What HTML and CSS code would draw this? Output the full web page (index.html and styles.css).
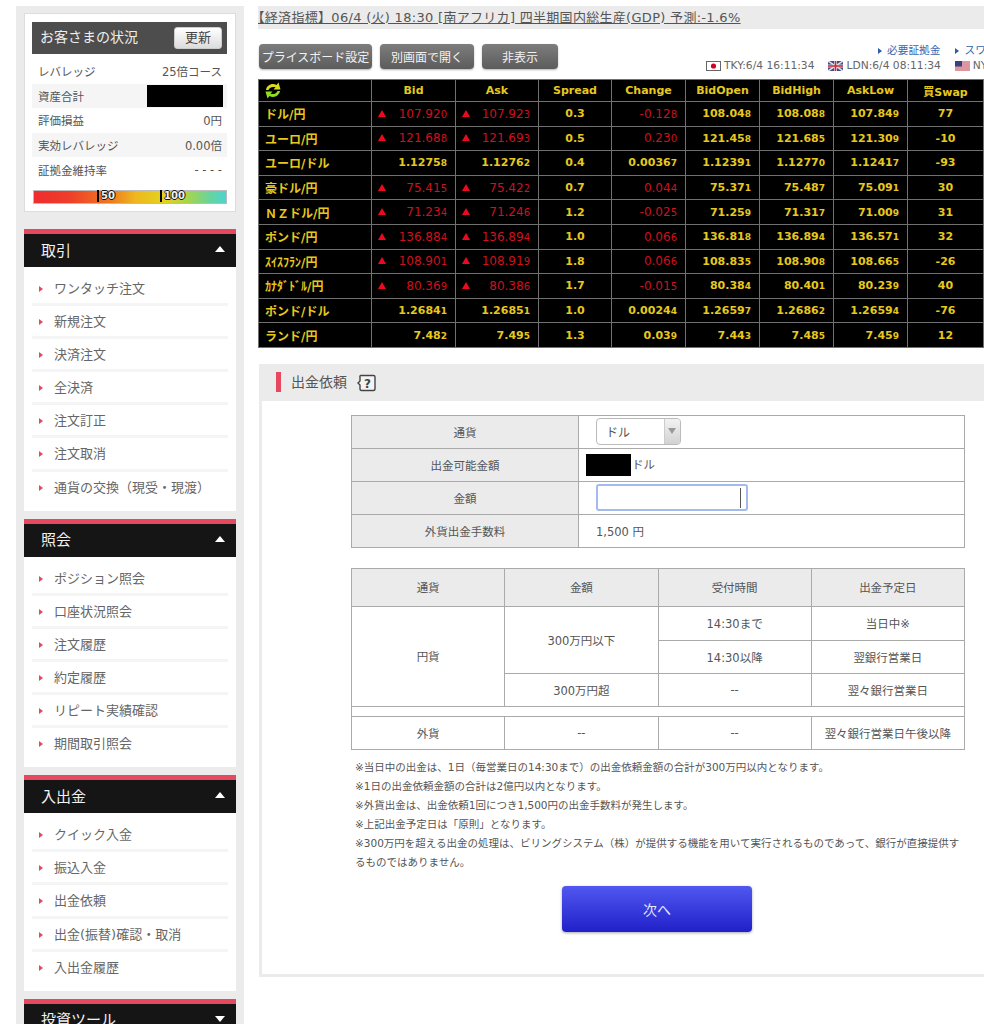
FILE: index.html
```html
<!DOCTYPE html>
<html lang="ja">
<head>
<meta charset="utf-8">
<title>出金依頼</title>
<link rel="stylesheet" href="styles.css">
</head>
<body>
<div class="page">
  <aside class="sidebar">
    <section class="status">
      <div class="status-head"><span class="status-title">お客さまの状況</span><button class="refresh">更新</button></div>
      <dl class="status-rows">
        <div class="status-row"><dt>レバレッジ</dt><dd>25倍コース</dd></div>
        <div class="status-row alt"><dt>資産合計</dt><dd><span class="redact-side"></span></dd></div>
        <div class="status-row"><dt>評価損益</dt><dd>0円</dd></div>
        <div class="status-row alt"><dt>実効レバレッジ</dt><dd>0.00倍</dd></div>
        <div class="status-row"><dt>証拠金維持率</dt><dd>- - - -</dd></div>
      </dl>
      <div class="gauge"><span class="mark m50">50</span><span class="mark m100">100</span></div>
    </section>

    <section class="nav first">
      <h2 class="nav-head">取引<i class="tri up"></i></h2>
      <ul class="nav-list">
        <li>ワンタッチ注文</li><li>新規注文</li><li>決済注文</li><li>全決済</li><li>注文訂正</li><li>注文取消</li><li>通貨の交換（現受・現渡）</li>
      </ul>
    </section>
    <section class="nav">
      <h2 class="nav-head">照会<i class="tri up"></i></h2>
      <ul class="nav-list">
        <li>ポジション照会</li><li>口座状況照会</li><li>注文履歴</li><li>約定履歴</li><li>リピート実績確認</li><li>期間取引照会</li>
      </ul>
    </section>
    <section class="nav">
      <h2 class="nav-head">入出金<i class="tri up"></i></h2>
      <ul class="nav-list">
        <li>クイック入金</li><li>振込入金</li><li>出金依頼</li><li>出金(振替)確認・取消</li><li>入出金履歴</li>
      </ul>
    </section>
    <section class="nav">
      <h2 class="nav-head">投資ツール<i class="tri down"></i></h2>
    </section>
  </aside>

  <main class="main">
    <div class="ticker"><a><span class="tight">【</span>経済指標】06/4 (火) 18:30 [南アフリカ] 四半期国内総生産(GDP) 予測:-1.6%</a></div>

    <div class="toolbar">
      <div class="tool-buttons">
        <button class="tool w1">プライスボード設定</button>
        <button class="tool w2">別画面で開く</button>
        <button class="tool w3">非表示</button>
      </div>
      <div class="tool-info">
        <div class="links"><a class="lnk">必要証拠金</a><a class="lnk">スワップ</a></div>
        <div class="clocks">
          <span class="clock"><svg class="flag" viewBox="0 0 15 10"><rect x=".5" y=".5" width="14" height="9" fill="#fff" stroke="#666"/><circle cx="7.5" cy="5" r="2.6" fill="#d3002a"/></svg>TKY:6/4 16:11:34</span>
          <span class="clock"><svg class="flag" viewBox="0 0 15 10"><rect width="15" height="10" fill="#3c4a8c"/><path d="M0 0L15 10M15 0L0 10" stroke="#ddd" stroke-width="1.6"/><path d="M7.5 0V10M0 5H15" stroke="#ddd" stroke-width="3"/><path d="M7.5 0V10M0 5H15" stroke="#c8283c" stroke-width="1.6"/></svg>LDN:6/4 08:11:34</span>
          <span class="clock"><svg class="flag" viewBox="0 0 15 10"><rect width="15" height="10" fill="#f3f3f3"/><path d="M0 1H15M0 3H15M0 5H15M0 7H15M0 9H15" stroke="#c8384a" stroke-width="1"/><rect width="7" height="5.5" fill="#39427f"/></svg>NY:6/4 03:11:34</span>
        </div>
      </div>
    </div>

    <table class="board">
      <colgroup><col class="c0"><col class="c1"><col class="c2"><col class="c3"><col class="c4"><col class="c5"><col class="c6"><col class="c7"><col class="c8"><col class="c9"></colgroup>
      <thead>
        <tr>
          <th class="icon-cell"><svg class="reload" viewBox="0 0 16 17"><path d="M1 8C1.500 3.500 7 0.500 11.500 3L13.500 0.500L15.500 7.500L8.500 7.500L10.500 5.300C7.500 4.300 4.500 5.300 3.500 8Z" fill="#d8dc1e"/><path d="M15 9C14.500 13.500 9 16.500 4.500 14L2.500 16.500L0.500 9.500L7.500 9.500L5.500 11.700C8.500 12.700 11.500 11.700 12.500 9Z" fill="#8ee01e"/></svg></th>
          <th>Bid</th><th>Ask</th><th>Spread</th><th>Change</th><th>BidOpen</th><th>BidHigh</th><th>AskLow</th><th>買Swap</th><th></th>
        </tr>
      </thead>
      <tbody>
        <tr><th>ドル/円</th><td class="up">107.92<small>0</small></td><td class="up">107.92<small>3</small></td><td class="ctr">0.3</td><td class="neg">-0.12<small>8</small></td><td>108.04<small>8</small></td><td>108.08<small>8</small></td><td>107.84<small>9</small></td><td class="ctr">77</td><td></td></tr>
        <tr><th>ユーロ/円</th><td class="up">121.68<small>8</small></td><td class="up">121.69<small>3</small></td><td class="ctr">0.5</td><td class="neg">0.23<small>0</small></td><td>121.45<small>8</small></td><td>121.68<small>5</small></td><td>121.30<small>9</small></td><td class="ctr">-10</td><td></td></tr>
        <tr><th>ユーロ/ドル</th><td>1.1275<small>8</small></td><td>1.1276<small>2</small></td><td class="ctr">0.4</td><td>0.0036<small>7</small></td><td>1.1239<small>1</small></td><td>1.1277<small>0</small></td><td>1.1241<small>7</small></td><td class="ctr">-93</td><td></td></tr>
        <tr><th>豪ドル/円</th><td class="up">75.41<small>5</small></td><td class="up">75.42<small>2</small></td><td class="ctr">0.7</td><td class="neg">0.04<small>4</small></td><td>75.37<small>1</small></td><td>75.48<small>7</small></td><td>75.09<small>1</small></td><td class="ctr">30</td><td></td></tr>
        <tr><th>ＮＺドル/円</th><td class="up">71.23<small>4</small></td><td class="up">71.24<small>6</small></td><td class="ctr">1.2</td><td class="neg">-0.02<small>5</small></td><td>71.25<small>9</small></td><td>71.31<small>7</small></td><td>71.00<small>9</small></td><td class="ctr">31</td><td></td></tr>
        <tr><th>ポンド/円</th><td class="up">136.88<small>4</small></td><td class="up">136.89<small>4</small></td><td class="ctr">1.0</td><td class="neg">0.06<small>6</small></td><td>136.81<small>8</small></td><td>136.89<small>4</small></td><td>136.57<small>1</small></td><td class="ctr">32</td><td></td></tr>
        <tr><th>ｽｲｽﾌﾗﾝ/円</th><td class="up">108.90<small>1</small></td><td class="up">108.91<small>9</small></td><td class="ctr">1.8</td><td class="neg">0.06<small>6</small></td><td>108.83<small>5</small></td><td>108.90<small>8</small></td><td>108.66<small>5</small></td><td class="ctr">-26</td><td></td></tr>
        <tr><th>ｶﾅﾀﾞﾄﾞﾙ/円</th><td class="up">80.36<small>9</small></td><td class="up">80.38<small>6</small></td><td class="ctr">1.7</td><td class="neg">-0.01<small>5</small></td><td>80.38<small>4</small></td><td>80.40<small>1</small></td><td>80.23<small>9</small></td><td class="ctr">40</td><td></td></tr>
        <tr><th>ポンド/ドル</th><td>1.2684<small>1</small></td><td>1.2685<small>1</small></td><td class="ctr">1.0</td><td>0.0024<small>4</small></td><td>1.2659<small>7</small></td><td>1.2686<small>2</small></td><td>1.2659<small>4</small></td><td class="ctr">-76</td><td></td></tr>
        <tr><th>ランド/円</th><td>7.48<small>2</small></td><td>7.49<small>5</small></td><td class="ctr">1.3</td><td>0.03<small>9</small></td><td>7.44<small>3</small></td><td>7.48<small>5</small></td><td>7.45<small>9</small></td><td class="ctr">12</td><td></td></tr>
      </tbody>
    </table>

    <section class="panel">
      <header class="panel-head">
        <h1>出金依頼</h1>
        <svg class="help" viewBox="0 0 19 18"><path d="M4 1.500H16.500A1.500 1.500 0 0 1 18 3V15A1.500 1.500 0 0 1 16.500 16.500H4.500A1.500 1.500 0 0 1 3 15V11L1 9L3 7V3A1 1 0 0 1 4 1.500Z" fill="#f4f4f4" stroke="#444" stroke-width="1.400"/><text x="10.500" y="13.500" class="help-q">?</text></svg>
      </header>
      <div class="panel-body">
        <table class="form-table">
          <tr><th>通貨</th><td><div class="select"><span>ドル</span><i class="select-btn"></i></div></td></tr>
          <tr><th>出金可能金額</th><td class="avail"><span class="redact-form"></span><span>ドル</span></td></tr>
          <tr><th>金額</th><td><div class="input"><i class="caret"></i></div></td></tr>
          <tr><th>外貨出金手数料</th><td class="fee">1,500 円</td></tr>
        </table>

        <table class="info-table">
          <thead><tr><th>通貨</th><th>金額</th><th>受付時間</th><th>出金予定日</th></tr></thead>
          <tbody>
            <tr class="r1"><td rowspan="3">円貨</td><td rowspan="2">300万円以下</td><td>14:30まで</td><td>当日中※</td></tr>
            <tr class="r2"><td>14:30以降</td><td>翌銀行営業日</td></tr>
            <tr class="r2"><td>300万円超</td><td>--</td><td>翌々銀行営業日</td></tr>
            <tr class="spacer"><td colspan="4"></td></tr>
            <tr class="r2"><td>外貨</td><td>--</td><td>--</td><td>翌々銀行営業日午後以降</td></tr>
          </tbody>
        </table>

        <ul class="notes">
          <li>※当日中の出金は、1日（毎営業日の14:30まで）の出金依頼金額の合計が300万円以内となります。</li>
          <li>※1日の出金依頼金額の合計は2億円以内となります。</li>
          <li>※外貨出金は、出金依頼1回につき1,500円の出金手数料が発生します。</li>
          <li>※上記出金予定日は「原則」となります。</li>
          <li>※300万円を超える出金の処理は、ビリングシステム（株）が提供する機能を用いて実行されるものであって、銀行が直接提供するものではありません。</li>
        </ul>

        <div class="next-wrap"><button class="next">次へ</button></div>
      </div>
    </section>
  </main>
</div>
</body>
</html>
```

FILE: styles.css
```css
* { box-sizing: border-box; }
html, body { margin: 0; padding: 0; height: 1024px; overflow: hidden; background: #fff; }
body { font-family: "DejaVu Sans", "Noto Sans CJK JP", sans-serif; color: #555; font-size: 12px; }
h1, h2, ul, dl, dd { margin: 0; padding: 0; }
ul { list-style: none; }
button { font-family: inherit; cursor: pointer; }

.page { display: flex; width: 984px; height: 1024px; overflow: hidden; }

/* Sidebar */
.sidebar { flex: 0 0 228px; margin: 6px 0 0 16px; padding: 7px 8px 0; background: #ebebeb; }
.status { height: 199px; background: #fff; border: 1px solid #ddd; padding: 8px 8px 0 7px; }
.status-head { display: flex; align-items: center; justify-content: space-between; height: 32px; padding: 0 5px 0 8px; background: #4d4d4d; color: #eee; font-size: 14px; }
.status-title { padding-bottom: 4px; }
.refresh { width: 48px; height: 22px; padding: 0; border: 1px solid #ccc; border-radius: 3px; background: linear-gradient(#fff, #dcdcdc); color: #444; font-size: 13px; line-height: 20px; }
.status-rows { margin-top: 5px; }
.status-row { display: flex; align-items: center; justify-content: space-between; height: 24.6px; padding: 0 5px 0 6px; font-size: 11.5px; }
.status-row.alt { background: #f5f5f5; }
.status-row dt { color: #555; }
.status-row dd { color: #555; }
.redact-side { display: block; width: 76px; height: 22px; margin-right: -1px; background: #000; }
.gauge { position: relative; height: 14px; margin: 8px 0 0 1px; border: 1px solid #bbb; background: linear-gradient(90deg, #ee2d30 0%, #ee3d2a 18%, #ee7a20 40%, #eeb81e 53%, #e2d41e 68%, #a8d44c 80%, #66d4a0 92%, #4cd4d0 100%); }
.mark { position: absolute; top: -1px; height: 12px; padding-left: 2px; border-left: 2px solid #000; font-size: 10px; font-weight: bold; line-height: 12px; color: #f2f2f2; text-shadow: 1px 0 0 #111, -1px 0 0 #111, 0 1px 0 #111, 0 -1px 0 #111; }
.m50 { left: 63px; }
.m100 { left: 126px; }

.nav { margin-top: 8px; background: #fff; }
.nav.first { margin-top: 17px; }
.nav-head { display: flex; align-items: center; justify-content: space-between; height: 38px; padding: 0 11px 3px 17px; border-top: 5px solid #e6495f; background: #151515; color: #f2f2f2; font-size: 15px; font-weight: normal; }
.tri { width: 0; height: 0; border-left: 5.500px solid transparent; border-right: 5.500px solid transparent; }
.tri.up { border-bottom: 6px solid #fff; }
.tri.down { border-top: 6px solid #fff; }
.nav-list { padding: 6px 8px; }
.nav-list li { position: relative; height: 33.1px; padding-left: 22px; border-bottom: 3px solid #f5f5f5; color: #666; font-size: 13px; line-height: 32px; white-space: nowrap; }
.nav-list li:last-child { border-bottom: 0; }
.nav-list li::before { content: ""; position: absolute; left: 7px; top: 13px; border-left: 4px solid #e6495f; border-top: 3px solid transparent; border-bottom: 3px solid transparent; }

/* Main */
.main { flex: 0 0 725px; margin-left: 15px; margin-top: 6px; min-width: 0; }
.ticker { height: 23px; margin-left: -1px; width: 727px; background: #ebebeb; font-size: 13px; line-height: 23px; color: #555; white-space: nowrap; letter-spacing: .3px; }
.ticker a { text-decoration: underline; }
.tight { font-feature-settings: "halt"; }

.toolbar { display: flex; justify-content: space-between; height: 50px; padding-top: 15px; }
.tool-buttons { display: flex; gap: 8px; }
.tool { height: 25px; padding: 0; border: 0; border-radius: 4px; background: linear-gradient(#7d7d7d, #5c5c5c); color: #f2f2f2; font-size: 12px; box-shadow: 0 1px 2px rgba(0,0,0,.3); white-space: nowrap; }
.w1 { width: 113px; }
.w2 { width: 94px; }
.w3 { width: 76px; }
.tool-info { display: flex; flex-direction: column; width: 278px; flex: none; overflow: hidden; font-size: 10.7px; }
.links { display: flex; gap: 15px; padding-left: 172px; height: 15px; line-height: 14px; white-space: nowrap; }
.lnk { position: relative; padding-left: 9px; color: #3566ad; }
.lnk::before { content: ""; position: absolute; left: 0; top: 4px; border-left: 4px solid #2b5da8; border-top: 3px solid transparent; border-bottom: 3px solid transparent; }
.clocks { display: flex; gap: 14px; height: 13px; align-items: center; white-space: nowrap; color: #666; }
.clock { display: flex; align-items: center; gap: 3px; flex: none; }
.flag { width: 15px; height: 10px; flex: none; }

.board { table-layout: fixed; width: 800px; margin: 0 0 0 -1px; border-collapse: collapse; background: #000; font-size: 11px; font-weight: bold; color: #e6c81e; }
.c0 { width: 113px; } .c1 { width: 84px; } .c2 { width: 83px; } .c3 { width: 73px; } .c4 { width: 74px; }
.c5 { width: 74px; } .c6 { width: 74px; } .c7 { width: 74px; } .c8 { width: 76px; } .c9 { width: 75px; }
.board th, .board td { padding: 0; border: 1px solid #707070; white-space: nowrap; overflow: hidden; }
.board thead th { height: 22px; text-align: center; font-size: 11px; }
.board tbody tr { height: 24.600px; }
.board tbody th { text-align: left; padding-left: 6px; font-size: 12px; }
.board td { text-align: right; padding-right: 8px; }
.board td.ctr { text-align: center; padding-right: 0; }
.board small { font-size: 9px; }
.board td.up, .board td.neg { color: #d0101e; font-weight: normal; font-size: 12px; }
.board td.up small, .board td.neg small { font-size: 10px; }
.board td.up::before { content: ""; float: left; margin: 3px 0 0 6px; border-left: 4.500px solid transparent; border-right: 4.500px solid transparent; border-bottom: 7px solid #ee0a1e; }
.board thead th.icon-cell { text-align: left; padding-left: 6px; }
.reload { display: block; width: 16px; height: 17px; }

.panel { width: 727px; margin-top: 16px; }
.panel-head { display: flex; align-items: center; gap: 10px; height: 37px; padding-left: 17px; background: #ebebeb; }
.panel-head h1 { height: 20px; padding-left: 10px; border-left: 5px solid #e6495f; color: #555; font-size: 14px; font-weight: normal; line-height: 20px; }
.help { width: 19px; height: 18px; margin-top: 2px; }
.help-q { font-size: 12px; font-weight: bold; fill: #444; text-anchor: middle; }
.panel-body { height: 576px; padding: 14px 0 0 89px; border-left: 3px solid #ebebeb; border-bottom: 3px solid #ebebeb; }

.form-table, .info-table { table-layout: fixed; width: 614px; border-collapse: collapse; }
.form-table th, .form-table td, .info-table th, .info-table td { padding: 0; border: 1px solid #aaa; font-weight: normal; font-size: 11.500px; color: #555; }
.form-table tr { height: 33px; }
.form-table th { width: 227px; background: #ebebeb; text-align: center; }
.form-table td { padding-left: 17px; }
.form-table td.avail { padding-left: 7px; }
.avail { font-size: 11px; }
.redact-form { display: inline-block; width: 45px; height: 22px; margin-right: 1px; background: #000; vertical-align: middle; }
.select { display: flex; justify-content: space-between; align-items: center; width: 85px; height: 27px; padding-left: 9px; border: 1px solid #bbb; border-radius: 4px; font-size: 12px; overflow: hidden; }
.select-btn { position: relative; width: 16px; height: 100%; border-left: 1px solid #ccc; background: linear-gradient(#f2f2f2, #d2d2d2); }
.select-btn::after { content: ""; position: absolute; left: 3px; top: 9px; border-left: 4.500px solid transparent; border-right: 4.500px solid transparent; border-top: 6px solid #999; }
.input { display: flex; justify-content: flex-end; align-items: center; width: 152px; height: 27px; padding-right: 5px; border: 2px solid #a2baee; border-radius: 3px; background: #fff; }
.caret { width: 1.500px; height: 20px; background: #555; }

.info-table { margin-top: 20px; }
.info-table th { height: 38px; background: #ebebeb; text-align: center; }
.info-table td { text-align: center; background: #fff; }
.info-table .r1 { height: 34px; }
.info-table .r2 { height: 33px; }
.info-table .spacer { height: 10px; }

.notes { width: 608px; margin: 8px 0 0 4px; font-size: 10.500px; line-height: 19px; color: #555; }
.next-wrap { display: flex; justify-content: center; width: 612px; margin: 14px 0 0; }
.next { width: 190px; height: 46px; border: 0; border-radius: 4px; background: linear-gradient(#5058f0, #2020c8); color: #e8e8ff; font-size: 14px; box-shadow: 0 1px 3px rgba(0,0,0,.35); }
```
